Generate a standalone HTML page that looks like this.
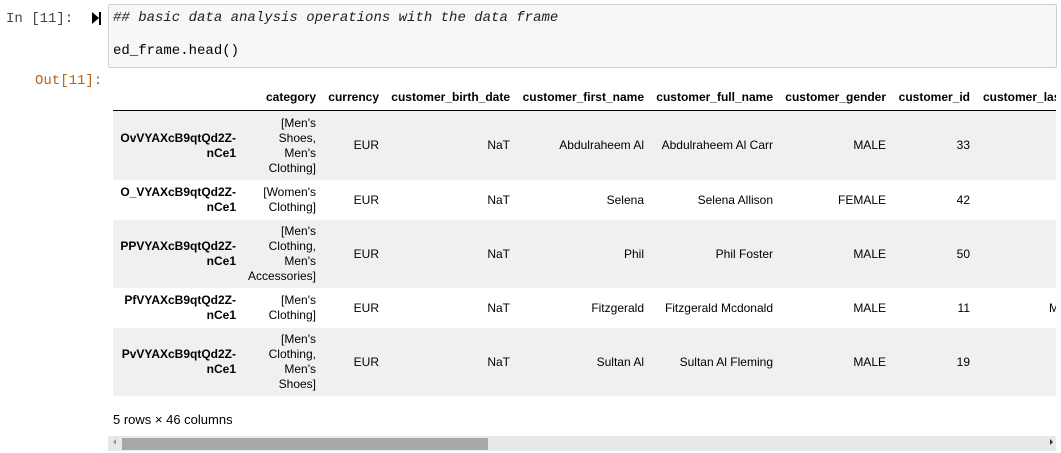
<!DOCTYPE html>
<html><head><style>
body{margin:0;width:1061px;height:453px;background:#fff;position:relative;overflow:hidden;font-family:"Liberation Sans",sans-serif;}
.mono{font-family:"Liberation Mono","DejaVu Sans Mono",monospace;font-size:14px;}
.a{position:absolute;}
.c{position:absolute;text-align:right;font-size:12px;color:#000;line-height:15px;display:flex;align-items:center;justify-content:flex-end;}
.h{font-weight:bold;}
</style></head><body>
<div class="a mono" style="left:6px;top:11px;color:#444;">In [11]:</div>
<div class="a" style="left:92px;top:12px;width:0;height:0;border-top:6.5px solid transparent;border-bottom:6.5px solid transparent;border-left:7px solid #000"></div>
<div class="a" style="left:99px;top:12px;width:2px;height:13px;background:#000"></div>
<div class="a" style="left:108px;top:4px;width:947px;height:62px;border:1px solid #cfcfcf;background:#f7f7f7;border-radius:2px;"></div>
<div class="a mono" style="left:113px;top:10px;font-style:italic;color:#1f1f1f">## basic data analysis operations with the data frame</div>
<div class="a mono" style="left:113px;top:43px;">ed_frame.head()</div>
<div class="a mono" style="left:35px;top:73px;color:#b5631a;">Out[11]:</div>
<div class="a" style="left:113px;top:80px;width:943px;height:320px;overflow:hidden;">
<div style="position:relative;left:-113px;top:-80px;">
<div class="a" style="left:113px;top:110px;width:1100px;height:1px;background:#000"></div>
<div class="a" style="left:113px;top:111px;width:1100px;height:69px;background:#f0f0f0"></div>
<div class="a" style="left:113px;top:220px;width:1100px;height:68px;background:#f0f0f0"></div>
<div class="a" style="left:113px;top:328px;width:1100px;height:68px;background:#f0f0f0"></div>
<div class="c h" style="left:240px;width:76px;top:90px;height:15px">category</div>
<div class="c h" style="left:320px;width:59px;top:90px;height:15px">currency</div>
<div class="c h" style="left:385px;width:125px;top:90px;height:15px">customer_birth_date</div>
<div class="c h" style="left:515px;width:129px;top:90px;height:15px">customer_first_name</div>
<div class="c h" style="left:650px;width:123px;top:90px;height:15px">customer_full_name</div>
<div class="c h" style="left:780px;width:106px;top:90px;height:15px">customer_gender</div>
<div class="c h" style="left:890px;width:80px;top:90px;height:15px">customer_id</div>
<div class="a h" style="left:983px;top:90px;font-size:12px;">customer_last_name</div>
<div class="c h" style="left:113px;width:123px;top:111px;height:69px">OvVYAXcB9qtQd2Z-<br>nCe1</div>
<div class="c" style="left:240px;width:76px;top:111px;height:69px">[Men's<br>Shoes,<br>Men's<br>Clothing]</div>
<div class="c" style="left:320px;width:59px;top:111px;height:69px">EUR</div>
<div class="c" style="left:385px;width:125px;top:111px;height:69px">NaT</div>
<div class="c" style="left:515px;width:129px;top:111px;height:69px">Abdulraheem Al</div>
<div class="c" style="left:650px;width:123px;top:111px;height:69px">Abdulraheem Al Carr</div>
<div class="c" style="left:780px;width:106px;top:111px;height:69px">MALE</div>
<div class="c" style="left:890px;width:80px;top:111px;height:69px">33</div>

<div class="c h" style="left:113px;width:123px;top:180px;height:40px">O_VYAXcB9qtQd2Z-<br>nCe1</div>
<div class="c" style="left:240px;width:76px;top:180px;height:40px">[Women's<br>Clothing]</div>
<div class="c" style="left:320px;width:59px;top:180px;height:40px">EUR</div>
<div class="c" style="left:385px;width:125px;top:180px;height:40px">NaT</div>
<div class="c" style="left:515px;width:129px;top:180px;height:40px">Selena</div>
<div class="c" style="left:650px;width:123px;top:180px;height:40px">Selena Allison</div>
<div class="c" style="left:780px;width:106px;top:180px;height:40px">FEMALE</div>
<div class="c" style="left:890px;width:80px;top:180px;height:40px">42</div>

<div class="c h" style="left:113px;width:123px;top:220px;height:68px">PPVYAXcB9qtQd2Z-<br>nCe1</div>
<div class="c" style="left:240px;width:76px;top:220px;height:68px">[Men's<br>Clothing,<br>Men's<br>Accessories]</div>
<div class="c" style="left:320px;width:59px;top:220px;height:68px">EUR</div>
<div class="c" style="left:385px;width:125px;top:220px;height:68px">NaT</div>
<div class="c" style="left:515px;width:129px;top:220px;height:68px">Phil</div>
<div class="c" style="left:650px;width:123px;top:220px;height:68px">Phil Foster</div>
<div class="c" style="left:780px;width:106px;top:220px;height:68px">MALE</div>
<div class="c" style="left:890px;width:80px;top:220px;height:68px">50</div>

<div class="c h" style="left:113px;width:123px;top:288px;height:40px">PfVYAXcB9qtQd2Z-<br>nCe1</div>
<div class="c" style="left:240px;width:76px;top:288px;height:40px">[Men's<br>Clothing]</div>
<div class="c" style="left:320px;width:59px;top:288px;height:40px">EUR</div>
<div class="c" style="left:385px;width:125px;top:288px;height:40px">NaT</div>
<div class="c" style="left:515px;width:129px;top:288px;height:40px">Fitzgerald</div>
<div class="c" style="left:650px;width:123px;top:288px;height:40px">Fitzgerald Mcdonald</div>
<div class="c" style="left:780px;width:106px;top:288px;height:40px">MALE</div>
<div class="c" style="left:890px;width:80px;top:288px;height:40px">11</div>
<div class="c" style="left:1049px;width:80px;top:288px;height:40px;justify-content:flex-start">Mcdonald</div>

<div class="c h" style="left:113px;width:123px;top:328px;height:68px">PvVYAXcB9qtQd2Z-<br>nCe1</div>
<div class="c" style="left:240px;width:76px;top:328px;height:68px">[Men's<br>Clothing,<br>Men's<br>Shoes]</div>
<div class="c" style="left:320px;width:59px;top:328px;height:68px">EUR</div>
<div class="c" style="left:385px;width:125px;top:328px;height:68px">NaT</div>
<div class="c" style="left:515px;width:129px;top:328px;height:68px">Sultan Al</div>
<div class="c" style="left:650px;width:123px;top:328px;height:68px">Sultan Al Fleming</div>
<div class="c" style="left:780px;width:106px;top:328px;height:68px">MALE</div>
<div class="c" style="left:890px;width:80px;top:328px;height:68px">19</div>
</div></div>
<div class="a" style="left:113px;top:412px;font-size:13px;">5 rows × 46 columns</div>
<div class="a" style="left:108px;top:436px;width:948px;height:15px;background:#e6e9e8"></div>
<div class="a" style="left:113px;top:439px;width:0;height:0;border-top:3px solid transparent;border-bottom:3px solid transparent;border-right:3px solid #999"></div>
<div class="a" style="left:1050px;top:439px;width:0;height:0;border-top:3px solid transparent;border-bottom:3px solid transparent;border-left:3px solid #333"></div>
<div class="a" style="left:122px;top:438px;width:366px;height:12px;background:#a8a8a8"></div>
</body></html>
